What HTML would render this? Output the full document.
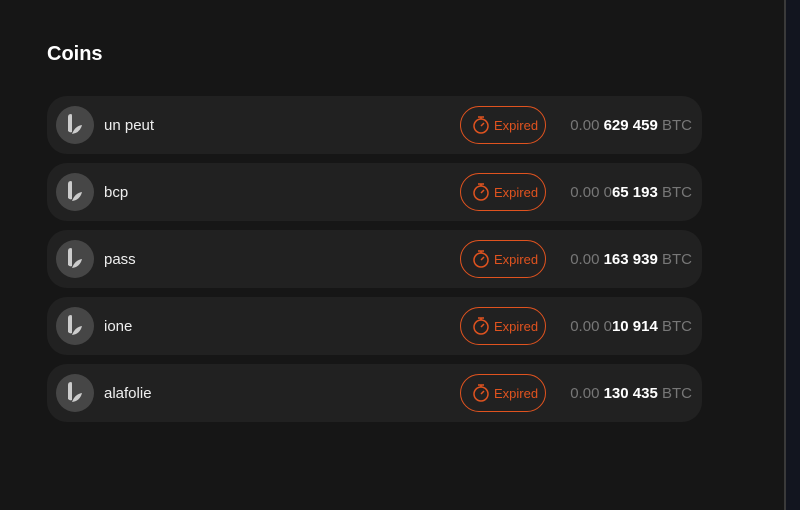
<!DOCTYPE html>
<html><head><style>
body{margin:0;width:800px;height:510px;background:#161616;font-family:"Liberation Sans",sans-serif;position:relative;overflow:hidden}
.side{position:absolute;left:784px;top:0;width:2px;height:510px;background:#3a3a3a}
.side2{position:absolute;left:786px;top:0;width:14px;height:510px;background:#12151f}
h1{position:absolute;left:47px;top:43px;margin:0;font-size:20px;font-weight:bold;color:#fff}
.card{position:absolute;left:47px;width:655px;height:58px;background:#212121;border-radius:20px}
.ic{position:absolute;left:9px;top:10px;width:38px;height:38px;border-radius:50%;background:#464646}
.name{position:absolute;left:57px;top:21px;font-size:15px;color:#eee}
.badge{position:absolute;left:413px;top:10px;width:84px;height:36px;border:1.3px solid #e0531f;border-radius:19px;color:#e0531f;font-size:13px}
.badge span{position:absolute;left:33px;top:11px}
.badge svg{position:absolute;left:11px;top:8px}
.amt{position:absolute;right:10px;top:21px;font-size:15px;color:#777}
.amt b{color:#fff}
</style></head><body>
<div class="side"></div><div class="side2"></div>
<h1>Coins</h1>
<div class="card" style="top:96px"><div class="ic"><svg width="38" height="38"><path d="M12 11 q0 -3 3 -3 q1 0 1 2 v16 q-2 1 -4 -1 z" fill="#ccc"/><path d="M16 28 q3 -8 10 -9 q-2 8 -10 9z" fill="#ccc"/></svg></div><div class="name">un peut</div><div class="badge"><svg width="18" height="20"><circle cx="9" cy="11" r="7" fill="none" stroke="#e0531f" stroke-width="1.5"/><path d="M6 2h6M9 2v2M9 11l3-3" stroke="#e0531f" stroke-width="1.5" fill="none"/></svg><span>Expired</span></div><div class="amt">0.00 <b>629 459</b> BTC</div></div>
<div class="card" style="top:163px"><div class="ic"><svg width="38" height="38"><path d="M12 11 q0 -3 3 -3 q1 0 1 2 v16 q-2 1 -4 -1 z" fill="#ccc"/><path d="M16 28 q3 -8 10 -9 q-2 8 -10 9z" fill="#ccc"/></svg></div><div class="name">bcp</div><div class="badge"><svg width="18" height="20"><circle cx="9" cy="11" r="7" fill="none" stroke="#e0531f" stroke-width="1.5"/><path d="M6 2h6M9 2v2M9 11l3-3" stroke="#e0531f" stroke-width="1.5" fill="none"/></svg><span>Expired</span></div><div class="amt">0.00 0<b>65 193</b> BTC</div></div>
<div class="card" style="top:230px"><div class="ic"><svg width="38" height="38"><path d="M12 11 q0 -3 3 -3 q1 0 1 2 v16 q-2 1 -4 -1 z" fill="#ccc"/><path d="M16 28 q3 -8 10 -9 q-2 8 -10 9z" fill="#ccc"/></svg></div><div class="name">pass</div><div class="badge"><svg width="18" height="20"><circle cx="9" cy="11" r="7" fill="none" stroke="#e0531f" stroke-width="1.5"/><path d="M6 2h6M9 2v2M9 11l3-3" stroke="#e0531f" stroke-width="1.5" fill="none"/></svg><span>Expired</span></div><div class="amt">0.00 <b>163 939</b> BTC</div></div>
<div class="card" style="top:297px"><div class="ic"><svg width="38" height="38"><path d="M12 11 q0 -3 3 -3 q1 0 1 2 v16 q-2 1 -4 -1 z" fill="#ccc"/><path d="M16 28 q3 -8 10 -9 q-2 8 -10 9z" fill="#ccc"/></svg></div><div class="name">ione</div><div class="badge"><svg width="18" height="20"><circle cx="9" cy="11" r="7" fill="none" stroke="#e0531f" stroke-width="1.5"/><path d="M6 2h6M9 2v2M9 11l3-3" stroke="#e0531f" stroke-width="1.5" fill="none"/></svg><span>Expired</span></div><div class="amt">0.00 0<b>10 914</b> BTC</div></div>
<div class="card" style="top:364px"><div class="ic"><svg width="38" height="38"><path d="M12 11 q0 -3 3 -3 q1 0 1 2 v16 q-2 1 -4 -1 z" fill="#ccc"/><path d="M16 28 q3 -8 10 -9 q-2 8 -10 9z" fill="#ccc"/></svg></div><div class="name">alafolie</div><div class="badge"><svg width="18" height="20"><circle cx="9" cy="11" r="7" fill="none" stroke="#e0531f" stroke-width="1.5"/><path d="M6 2h6M9 2v2M9 11l3-3" stroke="#e0531f" stroke-width="1.5" fill="none"/></svg><span>Expired</span></div><div class="amt">0.00 <b>130 435</b> BTC</div></div>
</body></html>
